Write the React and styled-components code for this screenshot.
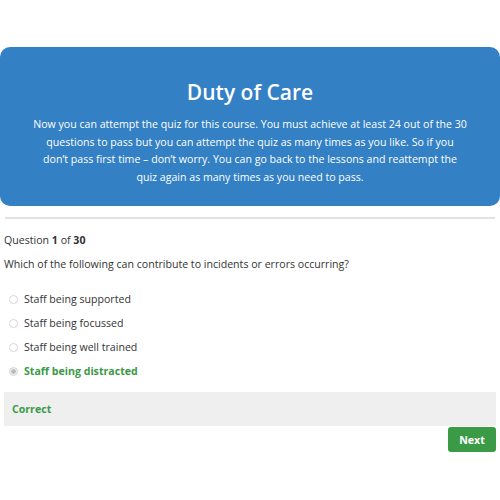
import styled, { createGlobalStyle } from 'styled-components'

const GlobalStyle = createGlobalStyle`
  body {
    margin: 0;
    background: #fff;
    font-family: "Open Sans", "Noto Sans", sans-serif;
    color: #333;
  }
`

const Page = styled.div`
  width: 500px;
  padding-top: 47px;
`

const Banner = styled.div`
  background: #3380c4;
  border-radius: 10px;
  padding: 31px 20px 20px;
  text-align: center;
  color: #fff;
`

const Title = styled.h1`
  margin: 0 0 10px;
  font-size: 21px;
  font-weight: 600;
  line-height: 28px;
`

const Intro = styled.p`
  margin: 0;
  font-size: 10.6px;
  line-height: 17.6px;
`

const Divider = styled.hr`
  margin: 11px 5px 0;
  border: none;
  height: 2px;
  background: #e2e2e2;
`

const Quiz = styled.div`
  padding: 12px 4px 0;
`

const Counter = styled.div`
  font-size: 10.6px;
  line-height: 18px;
  color: #333;
`

const QuestionText = styled.div`
  margin-top: 6px;
  font-size: 10.6px;
  line-height: 18px;
  color: #333;
`

const Options = styled.ul`
  list-style: none;
  margin: 17px 0 0;
  padding: 0 0 0 5px;
  display: flex;
  flex-direction: column;
  gap: 6px;
`

const Option = styled.li`
  display: flex;
  align-items: center;
  gap: 6px;
  height: 18px;
  font-size: 10.6px;
  line-height: 18px;
  color: ${(p) => (p.correct ? '#3a9a46' : '#333')};
  font-weight: ${(p) => (p.correct ? 700 : 400)};
`

const Radio = styled.span`
  width: 7px;
  height: 7px;
  border-radius: 50%;
  border: 1px solid #d6d6d6;
  background: ${(p) => (p.checked ? 'radial-gradient(circle, #bbb 0 2px, #eee 2.5px)' : '#fff')};
`

const Feedback = styled.div`
  margin-top: 12px;
  background: #efefef;
  padding: 8px 8px;
  height: 18px;
  line-height: 18px;
  font-size: 10.6px;
  font-weight: 700;
  color: #3a9a46;
  display: flex;
  align-items: center;
`

const Actions = styled.div`
  display: flex;
  justify-content: flex-end;
  margin-top: 1px;
`

const NextButton = styled.button`
  width: 48px;
  height: 25px;
  border: none;
  border-radius: 3px;
  background: #3a9a46;
  color: #fff;
  font-family: inherit;
  font-size: 10.6px;
  font-weight: 700;
  cursor: pointer;
`

const introLines = [
  'Now you can attempt the quiz for this course. You must achieve at least 24 out of the 30',
  'questions to pass but you can attempt the quiz as many times as you like. So if you',
  'don’t pass first time – don’t worry. You can go back to the lessons and reattempt the',
  'quiz again as many times as you need to pass.',
]

const options = [
  { text: 'Staff being supported' },
  { text: 'Staff being focussed' },
  { text: 'Staff being well trained' },
  { text: 'Staff being distracted', correct: true },
]

const App = () => {
  return (
    <Page>
      <GlobalStyle />
      <Banner>
        <Title>Duty of Care</Title>
        <Intro>
          {introLines.map((line, i) => (
            <span key={i}>
              {line}
              {i < introLines.length - 1 && <br />}
            </span>
          ))}
        </Intro>
      </Banner>
      <Divider />
      <Quiz>
        <Counter>
          Question <b>1</b> of <b>30</b>
        </Counter>
        <QuestionText>Which of the following can contribute to incidents or errors occurring?</QuestionText>
        <Options>
          {options.map((o) => (
            <Option key={o.text} correct={o.correct}>
              <Radio checked={o.correct} />
              {o.text}
            </Option>
          ))}
        </Options>
        <Feedback>Correct</Feedback>
        <Actions>
          <NextButton>Next</NextButton>
        </Actions>
      </Quiz>
    </Page>
  )
}

export default App
